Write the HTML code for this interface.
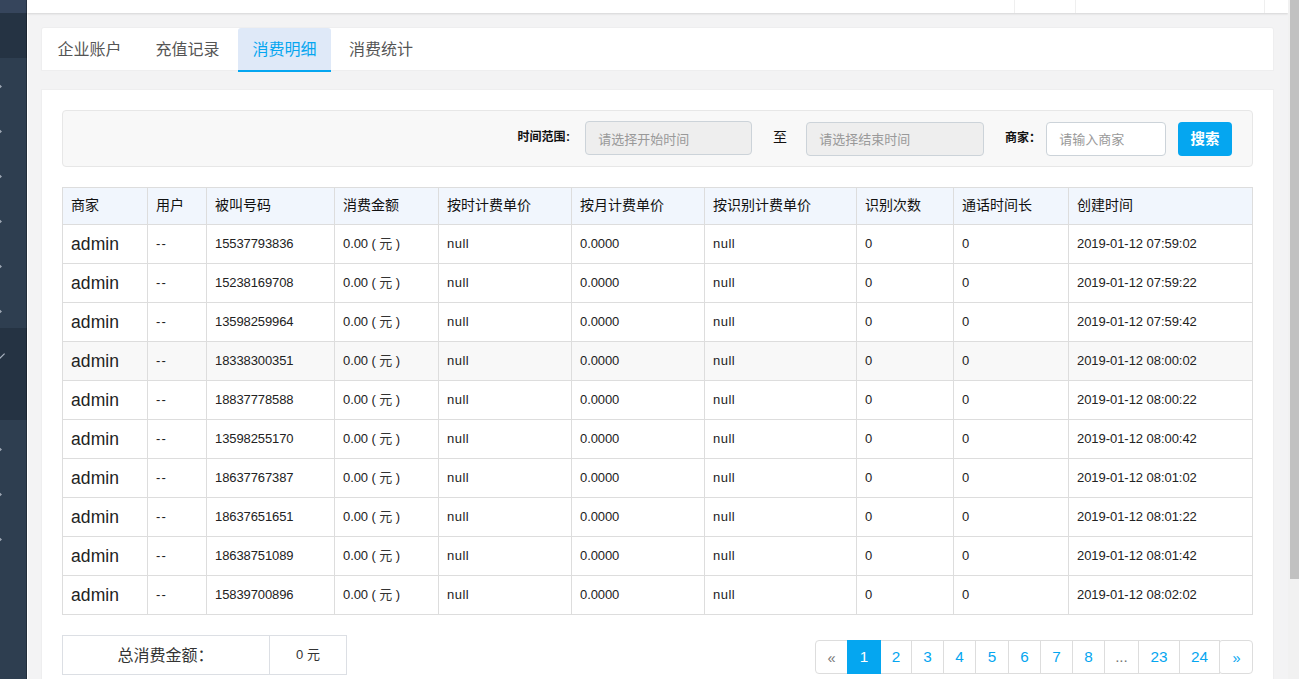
<!DOCTYPE html>
<html lang="zh-CN"><head><meta charset="utf-8"><title>消费明细</title>
<style>
*{box-sizing:border-box}
html,body{margin:0;padding:0;width:1299px;height:679px;overflow:hidden}
body{width:1299px;height:679px;overflow:hidden;position:relative;background:#f3f3f4;font-family:"Liberation Sans",sans-serif;font-size:13px;color:#333}
.cj{display:inline-block;position:relative;vertical-align:.12em;white-space:nowrap;font-family:"Liberation Sans","Noto Sans CJK SC",sans-serif;letter-spacing:0}
#side{position:absolute;left:0;top:0;width:27px;height:679px;background:#2e3e50;overflow:hidden}
#side .edge{position:absolute;left:26px;top:0;width:1px;height:679px;background:rgba(0,0,0,.26)}
#side .s-top{position:absolute;left:0;top:0;width:27px;height:13px;background:#36455c}
#side .s-head{position:absolute;left:0;top:13px;width:27px;height:45px;background:#253343}
#side .s-act{position:absolute;left:0;top:327.8px;width:27px;height:92.7px;background:#253343}
#side .chev{position:absolute;left:0;overflow:hidden}
#wl{position:absolute;left:27px;top:0;width:1px;height:679px;background:#fff}
#top{position:absolute;left:27px;top:0;width:1261px;height:13px;background:#fff;box-shadow:0 1px 2px rgba(0,0,0,.13)}
#top i{position:absolute;top:0;width:1px;height:13px;background:#efefef}
#sb-track{position:absolute;left:1288px;top:0;width:11px;height:679px;background:#f1f1f1}
#sb-thumb{position:absolute;left:1290px;top:0;width:9px;height:579px;background:#c1c1c1}
#tabs{position:absolute;left:42px;top:28px;width:1231px;height:42px;background:#fff;border-radius:2px 2px 0 0;box-shadow:0 0 0 1px rgba(0,0,0,.02)}
#tabs .tab{position:absolute;top:14.1px;display:block}
#tabs .tab-act{position:absolute;left:196px;top:0;width:93px;height:44px;background:#dfe9f8;border-bottom:2px solid #05a6f0;border-radius:3px 3px 0 0}
#main{position:absolute;left:42px;top:90px;width:1231px;height:589px;overflow:hidden;background:#fff;box-shadow:0 0 0 1px rgba(0,0,0,.02)}
#filter{position:absolute;left:20px;top:20px;width:1191px;height:57px;background:#f8f8f8;border:1px solid #e7e7e7;border-radius:4px}
#filter>*{position:absolute}
.lb{font-weight:bold;font-size:12px;color:#111;white-space:nowrap;line-height:12px;display:block}
.lb .colon{font-weight:bold;margin-left:.7px;position:relative;top:-1px}
.inp{height:34px;border:1px solid #ccd3d9;border-radius:4px;background:#fff;padding:10.7px 0 0 12.3px}
.inp.ro{background:#eee}
.btn{width:54px;height:34px;border-radius:4px;background:#05a6f0;padding:10.8px 0 0 12.5px}
#tb{position:absolute;left:20px;top:97px;border-collapse:collapse;table-layout:fixed;width:1191px}
#tb th,#tb td{border:1px solid #ddd;padding:0 0 0 8px;text-align:left;font-weight:normal;white-space:nowrap;overflow:hidden}
#tb th{height:37px;background:#f1f6fd}
#tb td{height:39px;font-size:13px;letter-spacing:-.1px;color:#222;padding-bottom:1.5px}
#tb tr.hov td{background:#f8f8f8}
#tb td.adm{font-size:17.5px;color:#222;letter-spacing:.1px;padding-top:1px;padding-bottom:0}
#total{position:absolute;left:20px;top:545px;width:285px;height:40px;border:1px solid #dcdfe4}
#total .t1{position:absolute;left:0;top:0;width:207px;height:38px;border-right:1px solid #dcdfe4;text-align:center;padding:11.8px 1px 0 0}
#total .t2{position:absolute;left:207px;top:0;width:76px;height:38px;text-align:center;line-height:38px;font-size:13px}
#tb td.dd{letter-spacing:1.2px;padding-bottom:2px}
#tb td.nl{letter-spacing:.5px}
#tb td.dt{letter-spacing:-.05px}
#pg{position:absolute;left:773px;top:550px;margin:0;padding:0;list-style:none;height:34px;width:438px}
#pg li{position:absolute;top:0;height:34px;border:1px solid #ddd;background:#fff;text-align:center;line-height:31px;font-size:15.3px;color:#05a6f0}
#pg li a{color:inherit;text-decoration:none}
#pg li.first{border-radius:4px 0 0 4px}
#pg li.last{border-radius:3px 4px 4px 3px;padding-left:1px}
#pg li.act{background:#05a6f0;border-color:#05a6f0;color:#fff;z-index:2}
#pg li.dis{color:#777}
#pg li.q{font-size:14.5px;line-height:34px}
</style></head>
<body>

<div id="side">
  <div class="s-top"></div>
  <div class="s-head"></div>
  <div class="s-act"></div><div class="edge"></div>
  <svg class="chev" style="top:83.0px" width="4" height="7" viewBox="0 0 4 7"><path d="M-1.8 1 L1.1 3.5 L-1.8 6" fill="none" stroke="#a3acb8" stroke-width="1.15"/></svg><svg class="chev" style="top:128.0px" width="4" height="7" viewBox="0 0 4 7"><path d="M-1.8 1 L1.1 3.5 L-1.8 6" fill="none" stroke="#a3acb8" stroke-width="1.15"/></svg><svg class="chev" style="top:173.0px" width="4" height="7" viewBox="0 0 4 7"><path d="M-1.8 1 L1.1 3.5 L-1.8 6" fill="none" stroke="#a3acb8" stroke-width="1.15"/></svg><svg class="chev" style="top:218.0px" width="4" height="7" viewBox="0 0 4 7"><path d="M-1.8 1 L1.1 3.5 L-1.8 6" fill="none" stroke="#a3acb8" stroke-width="1.15"/></svg><svg class="chev" style="top:263.0px" width="4" height="7" viewBox="0 0 4 7"><path d="M-1.8 1 L1.1 3.5 L-1.8 6" fill="none" stroke="#a3acb8" stroke-width="1.15"/></svg><svg class="chev" style="top:308.0px" width="4" height="7" viewBox="0 0 4 7"><path d="M-1.8 1 L1.1 3.5 L-1.8 6" fill="none" stroke="#a3acb8" stroke-width="1.15"/></svg><svg class="chev" style="top:446.0px" width="4" height="7" viewBox="0 0 4 7"><path d="M-1.8 1 L1.1 3.5 L-1.8 6" fill="none" stroke="#a3acb8" stroke-width="1.15"/></svg><svg class="chev" style="top:491.0px" width="4" height="7" viewBox="0 0 4 7"><path d="M-1.8 1 L1.1 3.5 L-1.8 6" fill="none" stroke="#a3acb8" stroke-width="1.15"/></svg><svg class="chev" style="top:536.0px" width="4" height="7" viewBox="0 0 4 7"><path d="M-1.8 1 L1.1 3.5 L-1.8 6" fill="none" stroke="#a3acb8" stroke-width="1.15"/></svg>
  <svg class="chev" style="top:351px" width="8" height="10" viewBox="0 0 8 10"><path d="M-1.5 8.6 L4.6 2.6" fill="none" stroke="#a9b3c0" stroke-width="1.25"/></svg>
</div>
<div id="wl"></div><div id="top"><i style="left:987px"></i><i style="left:1048px"></i><i style="left:1237px"></i></div>
<div id="sb-track"></div><div id="sb-thumb"></div><div id="tabs"><div class="tab-act"></div><a class="tab" style="left:15.6px"><span class="cj " style="width:64px;height:16.0px;font-size:16px;line-height:16px;color:#555">企业账户</span></a><a class="tab" style="left:113.6px"><span class="cj " style="width:64px;height:16.0px;font-size:16px;line-height:16px;color:#555">充值记录</span></a><a class="tab" style="left:210.6px"><span class="cj " style="width:64px;height:16.0px;font-size:16px;line-height:16px;color:#05a6f0">消费明细</span></a><a class="tab" style="left:307.1px"><span class="cj " style="width:64px;height:16.0px;font-size:16px;line-height:16px;color:#555">消费统计</span></a></div><div id="main">
<div id="filter">
  <label class="lb" style="left:454.4px;top:20px"><span class="cj " style="width:48px;height:12.0px;font-size:12px;line-height:12px;color:#111">时间范围</span><b class="colon">:</b></label>
  <div class="inp ro" style="left:522px;top:10px;width:167px"><span class="cj " style="width:91px;height:13.0px;font-size:13px;line-height:13px;color:#999">请选择开始时间</span></div>
  <span class="zhi" style="left:710px;top:19px"><span class="cj " style="width:14px;height:14.0px;font-size:14px;line-height:14px;color:#111">至</span></span>
  <div class="inp ro" style="left:743px;top:11px;width:178px;padding-top:9.7px"><span class="cj " style="width:91px;height:13.0px;font-size:13px;line-height:13px;color:#999">请选择结束时间</span></div>
  <label class="lb" style="left:942px;top:20.6px"><span class="cj " style="width:36px;height:12.0px;font-size:12px;line-height:12px;color:#111">商家：</span></label>
  <div class="inp" style="left:983px;top:11px;width:120px;padding-top:9.7px"><span class="cj " style="width:65px;height:13.0px;font-size:13px;line-height:13px;color:#999">请输入商家</span></div>
  <div class="btn" style="left:1115px;top:11px"><span class="cj " style="width:29.0px;height:13.34px;font-size:14.5px;line-height:13.34px;font-weight:bold;color:#fff">搜索</span></div>
</div><table id="tb"><colgroup><col style="width:85px"><col style="width:59px"><col style="width:128px"><col style="width:104px"><col style="width:133px"><col style="width:133px"><col style="width:152px"><col style="width:97px"><col style="width:115px"><col style="width:184px"></colgroup><thead><tr><th><span class="cj hd" style="width:28px;height:13.16px;top:1.3px;font-size:14px;line-height:13.16px;color:#111">商家</span></th><th><span class="cj hd" style="width:28px;height:13.16px;top:1.3px;font-size:14px;line-height:13.16px;color:#111">用户</span></th><th><span class="cj hd" style="width:56px;height:13.16px;top:1.3px;font-size:14px;line-height:13.16px;color:#111">被叫号码</span></th><th><span class="cj hd" style="width:56px;height:13.16px;top:1.3px;font-size:14px;line-height:13.16px;color:#111">消费金额</span></th><th><span class="cj hd" style="width:84px;height:13.16px;top:1.3px;font-size:14px;line-height:13.16px;color:#111">按时计费单价</span></th><th><span class="cj hd" style="width:84px;height:13.16px;top:1.3px;font-size:14px;line-height:13.16px;color:#111">按月计费单价</span></th><th><span class="cj hd" style="width:98px;height:13.16px;top:1.3px;font-size:14px;line-height:13.16px;color:#111">按识别计费单价</span></th><th><span class="cj hd" style="width:56px;height:13.16px;top:1.3px;font-size:14px;line-height:13.16px;color:#111">识别次数</span></th><th><span class="cj hd" style="width:70px;height:13.16px;top:1.3px;font-size:14px;line-height:13.16px;color:#111">通话时间长</span></th><th><span class="cj hd" style="width:56px;height:13.16px;top:1.3px;font-size:14px;line-height:13.16px;color:#111">创建时间</span></th></tr></thead><tbody><tr><td class="adm">admin</td><td class="dd">--</td><td>15537793836</td><td>0.00 ( <span class="cj " style="width:13px;height:13.0px;top:2px;font-size:13px;line-height:13px;color:#333">元</span> )</td><td class="nl">null</td><td>0.0000</td><td class="nl">null</td><td>0</td><td>0</td><td class="dt">2019-01-12 07:59:02</td></tr><tr><td class="adm">admin</td><td class="dd">--</td><td>15238169708</td><td>0.00 ( <span class="cj " style="width:13px;height:13.0px;top:2px;font-size:13px;line-height:13px;color:#333">元</span> )</td><td class="nl">null</td><td>0.0000</td><td class="nl">null</td><td>0</td><td>0</td><td class="dt">2019-01-12 07:59:22</td></tr><tr><td class="adm">admin</td><td class="dd">--</td><td>13598259964</td><td>0.00 ( <span class="cj " style="width:13px;height:13.0px;top:2px;font-size:13px;line-height:13px;color:#333">元</span> )</td><td class="nl">null</td><td>0.0000</td><td class="nl">null</td><td>0</td><td>0</td><td class="dt">2019-01-12 07:59:42</td></tr><tr class="hov"><td class="adm">admin</td><td class="dd">--</td><td>18338300351</td><td>0.00 ( <span class="cj " style="width:13px;height:13.0px;top:2px;font-size:13px;line-height:13px;color:#333">元</span> )</td><td class="nl">null</td><td>0.0000</td><td class="nl">null</td><td>0</td><td>0</td><td class="dt">2019-01-12 08:00:02</td></tr><tr><td class="adm">admin</td><td class="dd">--</td><td>18837778588</td><td>0.00 ( <span class="cj " style="width:13px;height:13.0px;top:2px;font-size:13px;line-height:13px;color:#333">元</span> )</td><td class="nl">null</td><td>0.0000</td><td class="nl">null</td><td>0</td><td>0</td><td class="dt">2019-01-12 08:00:22</td></tr><tr><td class="adm">admin</td><td class="dd">--</td><td>13598255170</td><td>0.00 ( <span class="cj " style="width:13px;height:13.0px;top:2px;font-size:13px;line-height:13px;color:#333">元</span> )</td><td class="nl">null</td><td>0.0000</td><td class="nl">null</td><td>0</td><td>0</td><td class="dt">2019-01-12 08:00:42</td></tr><tr><td class="adm">admin</td><td class="dd">--</td><td>18637767387</td><td>0.00 ( <span class="cj " style="width:13px;height:13.0px;top:2px;font-size:13px;line-height:13px;color:#333">元</span> )</td><td class="nl">null</td><td>0.0000</td><td class="nl">null</td><td>0</td><td>0</td><td class="dt">2019-01-12 08:01:02</td></tr><tr><td class="adm">admin</td><td class="dd">--</td><td>18637651651</td><td>0.00 ( <span class="cj " style="width:13px;height:13.0px;top:2px;font-size:13px;line-height:13px;color:#333">元</span> )</td><td class="nl">null</td><td>0.0000</td><td class="nl">null</td><td>0</td><td>0</td><td class="dt">2019-01-12 08:01:22</td></tr><tr><td class="adm">admin</td><td class="dd">--</td><td>18638751089</td><td>0.00 ( <span class="cj " style="width:13px;height:13.0px;top:2px;font-size:13px;line-height:13px;color:#333">元</span> )</td><td class="nl">null</td><td>0.0000</td><td class="nl">null</td><td>0</td><td>0</td><td class="dt">2019-01-12 08:01:42</td></tr><tr><td class="adm">admin</td><td class="dd">--</td><td>15839700896</td><td>0.00 ( <span class="cj " style="width:13px;height:13.0px;top:2px;font-size:13px;line-height:13px;color:#333">元</span> )</td><td class="nl">null</td><td>0.0000</td><td class="nl">null</td><td>0</td><td>0</td><td class="dt">2019-01-12 08:02:02</td></tr></tbody></table>
<div id="total"><div class="t1"><span class="cj " style="width:96px;height:16.0px;font-size:16px;line-height:16px;color:#333">总消费金额：</span></div><div class="t2">0 <span class="cj " style="width:13px;height:13.0px;top:2px;font-size:13px;line-height:13px;color:#333">元</span></div></div><ul id="pg"><li class="dis q first" style="left:0px;width:33px"><a>«</a></li><li class="act" style="left:32px;width:34px"><a>1</a></li><li class="" style="left:65px;width:32px"><a>2</a></li><li class="" style="left:96px;width:33px"><a>3</a></li><li class="" style="left:128px;width:33px"><a>4</a></li><li class="" style="left:160px;width:34px"><a>5</a></li><li class="" style="left:193px;width:33px"><a>6</a></li><li class="" style="left:225px;width:33px"><a>7</a></li><li class="" style="left:257px;width:33px"><a>8</a></li><li class="dis" style="left:289px;width:35px"><a>...</a></li><li class="" style="left:323px;width:42px"><a>23</a></li><li class="" style="left:364px;width:41px"><a>24</a></li><li class="q last" style="left:404px;width:34px"><a>»</a></li></ul></div>
</body></html>
